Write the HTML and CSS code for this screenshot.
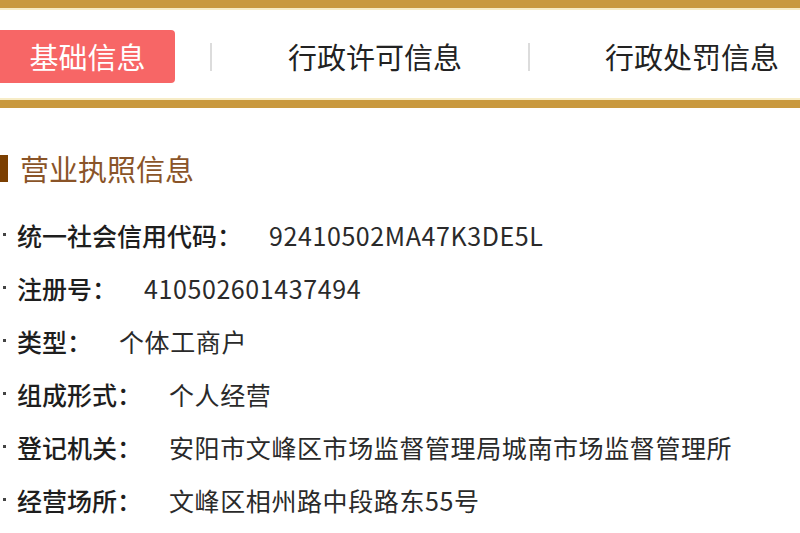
FILE: index.html
```html
<!DOCTYPE html>
<html lang="zh-CN">
<head>
<meta charset="utf-8">
<link rel="stylesheet" href="styles.css">
</head>
<body>
<div class="nav">
  <div class="tab active">基础信息</div>
  <div class="sep s1"></div>
  <div class="tab t2">行政许可信息</div>
  <div class="sep s2"></div>
  <div class="tab t3">行政处罚信息</div>
</div>
<div class="section">
  <div class="title"><span class="mark"></span>营业执照信息</div>
  <ul class="list">
    <li><span class="label">统一社会信用代码：</span><span class="value">92410502MA47K3DE5L</span></li>
    <li><span class="label">注册号：</span><span class="value">410502601437494</span></li>
    <li><span class="label">类型：</span><span class="value">个体工商户</span></li>
    <li><span class="label">组成形式：</span><span class="value">个人经营</span></li>
    <li><span class="label">登记机关：</span><span class="value">安阳市文峰区市场监督管理局城南市场监督管理所</span></li>
    <li><span class="label">经营场所：</span><span class="value">文峰区相州路中段路东55号</span></li>
  </ul>
</div>
</body>
</html>
```
FILE: styles.css
```css
html, body {
  margin: 0;
  padding: 0;
  background: #fff;
  width: 800px;
  height: 533px;
  overflow: hidden;
  font-family: "Noto Sans CJK SC", "Noto Sans", sans-serif;
}
.nav {
  display: flex;
  align-items: center;
  height: 92px;
  border-top: 8px solid #c9993f;
  border-bottom: 8px solid #c9993f;
  box-shadow: inset 0 2px 0 #f7ecc6, inset 0 -2px 0 #f7ecc6;
}
.tab {
  font-size: 29px;
  line-height: 53px;
  color: #222;
  white-space: nowrap;
}
.tab.active {
  width: 175px;
  height: 53px;
  margin-top: 5px;
  background: #f76666;
  color: #fff;
  text-align: center;
  border-radius: 0 4px 4px 0;
}
.t2, .t3 {
  margin-top: 5px;
}
.sep {
  width: 2px;
  height: 28px;
  margin-top: 5px;
  background: #dcdcdc;
}
.s1 { margin-left: 35px; }
.t2 { margin-left: 76px; }
.s2 { margin-left: 66px; }
.t3 { margin-left: 75px; }
.section {
  padding-top: 45px;
}
.title {
  display: flex;
  align-items: center;
  font-size: 29px;
  line-height: 30px;
  color: #8a5428;
  height: 30px;
}
.mark {
  width: 8px;
  height: 27px;
  background: #7b3f02;
  margin-right: 12px;
}
.list {
  list-style: none;
  margin: 25px 0 0;
  padding: 0;
}
.list li {
  position: relative;
  display: flex;
  align-items: center;
  height: 53px;
  padding-left: 17px;
  font-size: 25px;
  white-space: nowrap;
}
.list li::before {
  content: "";
  position: absolute;
  left: 3px;
  top: 25px;
  width: 3px;
  height: 3px;
  background: #444;
}
.label {
  color: #1e1e1e;
  font-weight: 500;
}
.value {
  color: #2a2a2a;
  margin-left: 27px;
  letter-spacing: 0.6px;
}
```
